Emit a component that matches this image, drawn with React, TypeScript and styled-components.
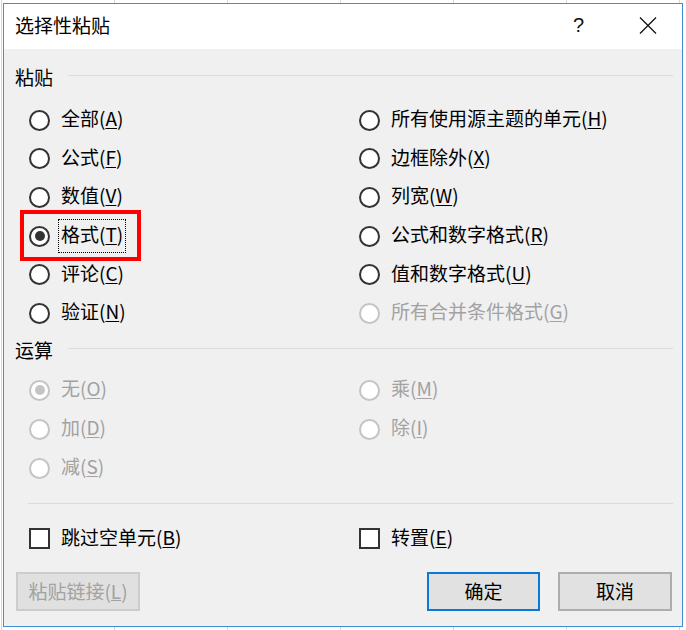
import React from "react";
import styled, { createGlobalStyle } from "styled-components";

const Global = createGlobalStyle`
  html, body { margin: 0; padding: 0; }
  body {
    width: 686px;
    height: 630px;
    overflow: hidden;
    background-color: #ffffff;
    background-image: linear-gradient(
      to right,
      transparent 0px,
      transparent 112px,
      #d8d8d8 112px,
      #d8d8d8 113px
    );
    background-size: 113px 100%;
    background-position: 2px 0;
    font-family: "Noto Sans CJK SC", "Noto Sans", sans-serif;
  }
  #root { padding: 3px; }
`;

const Dialog = styled.div`
  box-sizing: border-box;
  width: 680px;
  height: 624px;
  border: 1px solid #3f8fd8;
  display: flex;
  flex-direction: column;
  background: #f0f0f0;
`;

const TitleBar = styled.div`
  height: 45px;
  flex: none;
  background: #ffffff;
  display: flex;
  align-items: center;
  padding-left: 11px;
`;

const Title = styled.div`
  flex: 1;
  font-size: 19px;
  color: #000;
  line-height: 1;
  margin-top: -4px;
`;

const CaptionButton = styled.div`
  width: 69px;
  height: 45px;
  display: flex;
  align-items: center;
  justify-content: center;
  font-family: "Liberation Sans", "Noto Sans", sans-serif;
  font-size: 20px;
  color: #111;
  padding-bottom: 3px;
  box-sizing: border-box;
`;

const Body = styled.div`
  flex: 1;
  display: flex;
  flex-direction: column;
`;

const SectionHeader = styled.div<{ $mt: number }>`
  display: flex;
  align-items: center;
  gap: 15px;
  height: 28px;
  margin-top: ${(p) => p.$mt}px;
  padding: 0 9px 0 11px;
  font-size: 19px;
  color: #000;
  span {
    margin-top: -2px;
  }
`;

const HeaderLine = styled.div`
  flex: 1;
  height: 1px;
  background: #dadada;
  margin-top: -3px;
`;

const OptionGrid = styled.div<{ $mt: number; $row: number }>`
  display: grid;
  grid-template-columns: 330px 1fr;
  grid-auto-rows: ${(p) => p.$row}px;
  margin-top: ${(p) => p.$mt}px;
  padding-left: 25px;
`;

const Item = styled.div<{ $disabled?: boolean }>`
  position: relative;
  display: flex;
  align-items: center;
  font-size: 19px;
  color: ${(p) => (p.$disabled ? "#a2a2a2" : "#000")};
`;

const RadioCircle = styled.div<{ $disabled?: boolean; $checked?: boolean }>`
  box-sizing: border-box;
  width: 21px;
  height: 21px;
  flex: none;
  border-radius: 50%;
  border: 2px solid ${(p) => (p.$disabled ? "#c4c4c4" : "#333333")};
  background: #ffffff;
  display: flex;
  align-items: center;
  justify-content: center;
  &::after {
    content: "";
    display: ${(p) => (p.$checked ? "block" : "none")};
    width: 10px;
    height: 10px;
    border-radius: 50%;
    background: ${(p) => (p.$disabled ? "#c4c4c4" : "#333333")};
  }
`;

const CheckBox = styled.div`
  box-sizing: border-box;
  width: 21px;
  height: 21px;
  flex: none;
  border: 2px solid #333333;
  background: #ffffff;
`;

const Label = styled.span<{ $focus?: boolean }>`
  margin-left: 8px;
  padding: 3px 2px 7px;
  line-height: 22px;
  border: 1px ${(p) => (p.$focus ? "dotted #000" : "solid transparent")};
  white-space: nowrap;
  u {
    text-decoration: underline;
    text-decoration-thickness: 1px;
    text-underline-offset: 2px;
  }
`;

const Highlight = styled.div`
  position: absolute;
  left: -9px;
  top: -7px;
  width: 121px;
  height: 51px;
  box-sizing: border-box;
  border: 4px solid #ff0000;
  pointer-events: none;
`;

const Divider = styled.div`
  height: 1px;
  background: #dadada;
  margin: 15px 9px 15.5px 24px;
`;

const CheckRow = styled.div`
  display: grid;
  grid-template-columns: 330px 1fr;
  height: 39px;
  padding-left: 25px;
`;

const ButtonRow = styled.div`
  display: flex;
  align-items: center;
  margin-top: 14px;
  padding: 0 10px 0 12px;
  height: 39px;
`;

const Spacer = styled.div`
  flex: 1;
`;

const Button = styled.div<{ $width: number; $variant?: "default" | "primary" | "disabled" }>`
  box-sizing: border-box;
  width: ${(p) => p.$width}px;
  height: 39px;
  display: flex;
  align-items: center;
  justify-content: center;
  padding-bottom: 3px;
  font-size: 19px;
  background: ${(p) => (p.$variant === "disabled" ? "#e0e0e0" : "#e1e1e1")};
  color: ${(p) => (p.$variant === "disabled" ? "#a2a2a2" : "#000")};
  border: 2px solid
    ${(p) =>
      p.$variant === "primary" ? "#0a78d6" : p.$variant === "disabled" ? "#cccccc" : "#adadad"};
  & + & {
    margin-left: 18px;
  }
`;

type Opt = {
  text: string;
  key?: string;
  checked?: boolean;
  disabled?: boolean;
  focus?: boolean;
  highlight?: boolean;
} | null;

const Text = ({ text, k }: { text: string; k?: string }) => (
  <>
    {text}
    {k && (
      <>
        (<u>{k}</u>)
      </>
    )}
  </>
);

const Radio = ({ opt }: { opt: Opt }) => {
  if (!opt) return <div />;
  return (
    <Item $disabled={opt.disabled}>
      <RadioCircle $disabled={opt.disabled} $checked={opt.checked} />
      <Label $focus={opt.focus}>
        <Text text={opt.text} k={opt.key} />
      </Label>
      {opt.highlight && <Highlight />}
    </Item>
  );
};

const pasteOptions: Opt[] = [
  { text: "全部", key: "A" },
  { text: "所有使用源主题的单元", key: "H" },
  { text: "公式", key: "F" },
  { text: "边框除外", key: "X" },
  { text: "数值", key: "V" },
  { text: "列宽", key: "W" },
  { text: "格式", key: "T", checked: true, focus: true, highlight: true },
  { text: "公式和数字格式", key: "R" },
  { text: "评论", key: "C" },
  { text: "值和数字格式", key: "U" },
  { text: "验证", key: "N" },
  { text: "所有合并条件格式", key: "G", disabled: true },
];

const opOptions: Opt[] = [
  { text: "无", key: "O", checked: true, disabled: true },
  { text: "乘", key: "M", disabled: true },
  { text: "加", key: "D", disabled: true },
  { text: "除", key: "I", disabled: true },
  { text: "减", key: "S", disabled: true },
  null,
];

const CloseIcon = () => (
  <svg width="18" height="17" viewBox="0 0 18 17">
    <path d="M1 0.5 L17 16.5 M17 0.5 L1 16.5" stroke="#111" strokeWidth="1.3" fill="none" />
  </svg>
);

export default function App() {
  return (
    <>
      <Global />
      <Dialog>
        <TitleBar>
          <Title>选择性粘贴</Title>
          <CaptionButton>?</CaptionButton>
          <CaptionButton>
            <CloseIcon />
          </CaptionButton>
        </TitleBar>
        <Body>
          <SectionHeader $mt={14}>
            <span>粘贴</span>
            <HeaderLine />
          </SectionHeader>
          <OptionGrid $mt={10} $row={38.6}>
            {pasteOptions.map((o, i) => (
              <Radio key={i} opt={o} />
            ))}
          </OptionGrid>
          <SectionHeader $mt={3.5}>
            <span>运算</span>
            <HeaderLine />
          </SectionHeader>
          <OptionGrid $mt={6.5} $row={39}>
            {opOptions.map((o, i) => (
              <Radio key={i} opt={o} />
            ))}
          </OptionGrid>
          <Divider />
          <CheckRow>
            <Item>
              <CheckBox />
              <Label>
                <Text text="跳过空单元" k="B" />
              </Label>
            </Item>
            <Item>
              <CheckBox />
              <Label>
                <Text text="转置" k="E" />
              </Label>
            </Item>
          </CheckRow>
          <ButtonRow>
            <Button $width={124} $variant="disabled">
              <span>
                <Text text="粘贴链接" k="L" />
              </span>
            </Button>
            <Spacer />
            <Button $width={113} $variant="primary">确定</Button>
            <Button $width={114}>取消</Button>
          </ButtonRow>
        </Body>
      </Dialog>
    </>
  );
}
